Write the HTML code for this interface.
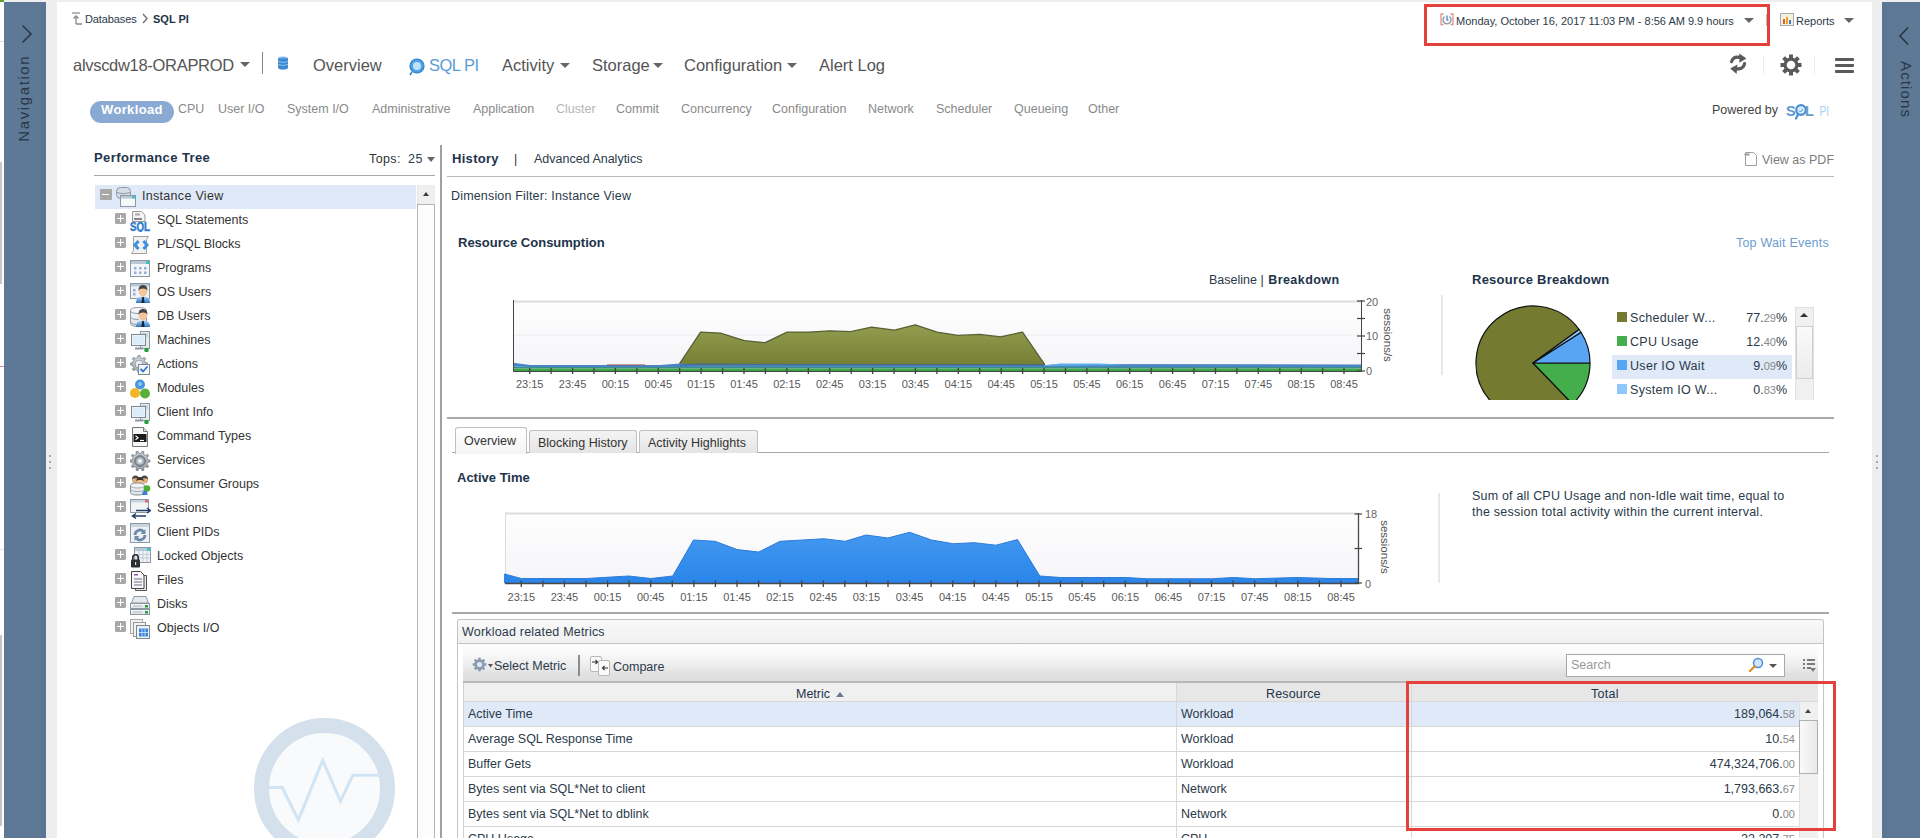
<!DOCTYPE html>
<html><head><meta charset="utf-8">
<style>
*{box-sizing:border-box;margin:0;padding:0}
html,body{width:1920px;height:838px;overflow:hidden}
body{position:relative;background:#eeeeee;font-family:"Liberation Sans",sans-serif;color:#2b3a4a}
.a{position:absolute}
.t{position:absolute;white-space:nowrap;line-height:16px;height:16px}
.side{position:absolute;top:2px;height:836px;background:#5d7995}
#main{position:absolute;left:57px;top:2px;width:1815px;height:836px;background:#fff}
.nav{font-size:16.5px;color:#555;line-height:20px;height:20px}
.sub{font-size:12.5px;color:#8a8a8a}
.caret{position:absolute;width:0;height:0;border-left:5px solid transparent;border-right:5px solid transparent;border-top:5px solid #666}
.tree{font-size:12.5px;color:#333}
.pb{position:absolute;width:11px;height:11px;background:#a8a8a8;border-radius:1px}
.pb:before{content:"";position:absolute;left:2px;top:5px;width:7px;height:1px;background:#fff}
.pb.p:after{content:"";position:absolute;left:5px;top:2px;width:1px;height:7px;background:#fff}
.h{font-weight:bold;color:#22334a}
</style></head><body>
<!-- left strip -->
<div class="a" style="left:0;top:0;width:4px;height:838px;background:#f4f4f4"></div>
<div class="a" style="left:0;top:0;width:4px;height:2px;background:#5aa02c"></div>
<div class="a" style="left:0;top:0;width:4px;height:838px;background:#fdfdfd"></div><div class="a" style="left:0;top:0;width:4px;height:2px;background:#5aa02c"></div><div class="a" style="left:0;top:162px;width:2px;height:122px;background:#c8c8c8"></div><div class="a" style="left:0;top:366px;width:4px;height:1px;background:#c89090"></div><div class="a" style="left:0;top:549px;width:4px;height:1px;background:#e4e4e4"></div><div class="a" style="left:0;top:635px;width:2px;height:191px;background:#c4c4c4"></div><div class="a" style="left:0;top:41px;width:4px;height:1px;background:#ddd"></div>
<div class="side" style="left:4px;width:42px"></div><div class="a" style="left:41px;top:2px;width:5px;height:836px;background:#5a7694"></div>
<svg class="a" style="left:20px;top:24px" width="14" height="20"><path d="M2.5 1.5 L11 10 L2.5 18.5" fill="none" stroke="#2a3645" stroke-width="1.6"/></svg>
<div class="t" style="left:-21px;top:91px;width:90px;height:16px;font-size:15px;letter-spacing:1.6px;text-indent:1.6px;color:#2a3645;transform:rotate(-90deg);text-align:center">Navigation</div>
<div class="a" style="left:49px;top:455px;width:2px;height:2px;background:#aaa"></div>
<div class="a" style="left:49px;top:461px;width:2px;height:2px;background:#aaa"></div>
<div class="a" style="left:49px;top:467px;width:2px;height:2px;background:#aaa"></div>

<div class="side" style="left:1882px;width:38px"></div><div class="a" style="left:1882px;top:2px;width:5px;height:836px;background:#5a7694"></div>
<svg class="a" style="left:1898px;top:26px" width="12" height="20"><path d="M10 1.5 L2 10 L10 18.5" fill="none" stroke="#2a3645" stroke-width="1.6"/></svg>
<div class="t" style="left:1874px;top:81px;width:64px;height:16px;font-size:15px;letter-spacing:1.1px;text-indent:1.1px;color:#2a3645;transform:rotate(90deg);text-align:center">Actions</div>
<div class="a" style="left:1876px;top:455px;width:2px;height:2px;background:#aaa"></div>
<div class="a" style="left:1876px;top:461px;width:2px;height:2px;background:#aaa"></div>
<div class="a" style="left:1876px;top:467px;width:2px;height:2px;background:#aaa"></div>

<div id="main"></div>

<!-- ===== HEADER ===== -->
<svg class="a" style="left:72px;top:12px" width="11" height="13"><path d="M0 1h8" stroke="#888" stroke-width="1.2"/><path d="M4 12V4M1.5 6.5L4 4l2.5 2.5M4 12h6" stroke="#888" stroke-width="1.3" fill="none"/></svg>
<div class="t" style="left:85px;top:10.7px;font-size:11px;color:#2b3a4a;letter-spacing:-0.1px">Databases</div>
<svg class="a" style="left:141px;top:13px" width="8" height="11"><path d="M2 1l4 4.5L2 10" stroke="#777" stroke-width="1.5" fill="none"/></svg>
<div class="t h" style="left:153px;top:10.7px;font-size:11px">SQL PI</div>

<div class="t nav" style="left:73px;top:55px;letter-spacing:-0.3px">alvscdw18-ORAPROD</div>
<div class="caret" style="left:240px;top:62px"></div>
<div class="a" style="left:262px;top:52px;width:1px;height:22px;background:#888"></div>
<svg class="a" style="left:277px;top:56px" width="12" height="14"><ellipse cx="6" cy="2.5" rx="5" ry="2" fill="#7fb6e8"/><rect x="1" y="2.5" width="10" height="9" fill="#3f88d2"/><ellipse cx="6" cy="11.5" rx="5" ry="2" fill="#3f88d2"/><path d="M1 5.5q5 2 10 0M1 8.5q5 2 10 0" stroke="#9fd0f5" fill="none" stroke-width="0.8"/></svg>
<div class="t nav" style="left:313px;top:55px">Overview</div>
<svg class="a" style="left:408px;top:57px" width="18" height="19"><circle cx="9" cy="9" r="7" fill="#4da3e6" stroke="#2d7fc8" stroke-width="1.2"/><circle cx="9" cy="9" r="4" fill="#bfe2fb"/><path d="M4 15l-2 3" stroke="#2d7fc8" stroke-width="1.5"/></svg>
<div class="t nav" style="left:429px;top:55px;color:#5b9bd5;letter-spacing:-0.5px">SQL PI</div>
<div class="t nav" style="left:502px;top:55px">Activity</div>
<div class="caret" style="left:560px;top:63px"></div>
<div class="t nav" style="left:592px;top:55px">Storage</div>
<div class="caret" style="left:653px;top:63px"></div>
<div class="t nav" style="left:684px;top:55px">Configuration</div>
<div class="caret" style="left:787px;top:63px"></div>
<div class="t nav" style="left:819px;top:55px">Alert Log</div>

<!-- top right -->
<div class="a" style="left:1424px;top:4px;width:346px;height:42px;border:3px solid #e4403c"></div>
<svg class="a" style="left:1440px;top:13px" width="15" height="13"><path d="M3.5 1H1V11.5H3.5M10.5 1H13V11.5H10.5" stroke="#e09090" stroke-width="1.3" fill="none"/><path d="M4.6 3.6A4 4 0 1 0 9.4 3.6" stroke="#9aa0a4" stroke-width="1.6" fill="none"/><path d="M7 2.5V7H8.5" stroke="#4f8ed0" stroke-width="1.4" fill="none"/></svg>
<div class="t" style="left:1456px;top:13px;font-size:11px;color:#2b3a4a">Monday, October 16, 2017 11:03 PM - 8:56 AM 9.9 hours</div>
<div class="caret" style="left:1744px;top:18px"></div>
<div class="a" style="left:1766px;top:14px;width:1px;height:12px;background:#bbb"></div>
<svg class="a" style="left:1780px;top:13px" width="14" height="13"><rect x="0.5" y="0.5" width="13" height="12" fill="#f4f0e0" stroke="#aaa"/><rect x="3" y="6" width="2" height="5" fill="#e06030"/><rect x="6" y="4" width="2" height="7" fill="#f0a020"/><rect x="9" y="7" width="2" height="4" fill="#3080d0"/></svg>
<div class="t" style="left:1796px;top:13px;font-size:11px;color:#2b3a4a">Reports</div>
<div class="caret" style="left:1844px;top:18px"></div>

<svg class="a" style="left:1729px;top:53px" width="19" height="22"><path d="M2.6 8.6C3.6 5 7 3.6 11 4.4" stroke="#5a5a5a" stroke-width="3.2" fill="none" stroke-linecap="round"/><path d="M10.2 0.6L17.4 5.6 10.4 9.8z" fill="#5a5a5a"/><path d="M15.6 10.6C15 14.6 11.6 16.4 7.4 15.8" stroke="#5a5a5a" stroke-width="3.2" fill="none" stroke-linecap="round"/><path d="M8.4 11.6L1.2 15.6 7.6 21z" fill="#5a5a5a"/></svg>
<div class="a" style="left:1763px;top:56px;width:1px;height:18px;background:#eee"></div>
<svg class="a" style="left:1780px;top:54px" width="22" height="22"><g fill="#5a5a5a" transform="translate(11 11)"><rect x="-2" y="-10.5" width="4" height="21"/><rect x="-2" y="-10.5" width="4" height="21" transform="rotate(45)"/><rect x="-2" y="-10.5" width="4" height="21" transform="rotate(90)"/><rect x="-2" y="-10.5" width="4" height="21" transform="rotate(135)"/><circle r="7.5"/></g><circle cx="11" cy="11" r="4.3" fill="#fff"/></svg>
<div class="a" style="left:1814px;top:56px;width:1px;height:18px;background:#eee"></div>
<div class="a" style="left:1835px;top:57.5px;width:19px;height:3px;background:#5a5a5a;border-radius:1px"></div>
<div class="a" style="left:1835px;top:63.5px;width:19px;height:3px;background:#5a5a5a;border-radius:1px"></div>
<div class="a" style="left:1835px;top:69.5px;width:19px;height:3px;background:#5a5a5a;border-radius:1px"></div>

<!-- sub tabs -->
<div class="a" style="left:90px;top:101px;width:84px;height:22px;border-radius:11px;background:#8aaad3"></div>
<div class="t" style="left:101px;top:100px;height:20px;line-height:20px;font-size:13px;font-weight:bold;color:#fff;letter-spacing:0.35px">Workload</div>
<div class="t sub" style="left:178px;top:101px">CPU</div>
<div class="t sub" style="left:218px;top:101px">User I/O</div>
<div class="t sub" style="left:287px;top:101px">System I/O</div>
<div class="t sub" style="left:372px;top:101px">Administrative</div>
<div class="t sub" style="left:473px;top:101px">Application</div>
<div class="t sub" style="left:556px;top:101px;color:#b5b5b5">Cluster</div>
<div class="t sub" style="left:616px;top:101px">Commit</div>
<div class="t sub" style="left:681px;top:101px">Concurrency</div>
<div class="t sub" style="left:772px;top:101px">Configuration</div>
<div class="t sub" style="left:868px;top:101px">Network</div>
<div class="t sub" style="left:936px;top:101px">Scheduler</div>
<div class="t sub" style="left:1014px;top:101px">Queueing</div>
<div class="t sub" style="left:1088px;top:101px">Other</div>
<div class="t" style="left:1712px;top:102px;font-size:12.5px;color:#444">Powered by</div>
<svg class="a" style="left:1784px;top:100px" width="50" height="22"><text x="2" y="15.5" font-family="Liberation Sans" font-weight="bold" font-size="14.5" fill="#5896d2">S</text><circle cx="17" cy="10" r="4.8" fill="#d8ecfb" stroke="#4a8fd0" stroke-width="2.2"/><path d="M14 14.5l-2 4" stroke="#4a8fd0" stroke-width="2.2" stroke-linecap="round"/><path d="M15 10.5l1.5 1.5 2.5-3" stroke="#4a8fd0" stroke-width="1" fill="none"/><text x="21" y="15.5" font-family="Liberation Sans" font-weight="bold" font-size="14.5" fill="#6a9cc8">L</text><text x="35.5" y="15.5" font-family="Liberation Sans" font-size="14" fill="#a6d0f0" textLength="9.5" lengthAdjust="spacingAndGlyphs">PI</text></svg>

<!--TREE-->
<div class="t h" style="left:94px;top:150px;font-size:13px;letter-spacing:0.4px">Performance Tree</div>
<div class="t" style="left:369px;top:151px;font-size:12.5px;color:#333;letter-spacing:0.4px">Tops:</div><div class="t" style="left:408px;top:151px;font-size:12.5px;color:#2b4050;letter-spacing:0.5px">25</div>
<div class="caret" style="left:427px;top:157px;border-left-width:4px;border-right-width:4px;border-top-width:5px;border-top-color:#666"></div>
<div class="a" style="left:94px;top:175px;width:341px;height:1px;background:#a8a8a8"></div>
<div class="a" style="left:95px;top:185px;width:321px;height:24px;background:#dfe9f7"></div>
<div class="pb" style="left:100px;top:189px;width:12px;height:11px"></div>
<div class="t tree" style="left:142px;top:188px;letter-spacing:0.3px">Instance View</div>
<div class="pb p" style="left:115px;top:213px"></div>
<div class="t tree" style="left:157px;top:212px">SQL Statements</div>
<div class="pb p" style="left:115px;top:237px"></div>
<div class="t tree" style="left:157px;top:236px">PL/SQL Blocks</div>
<div class="pb p" style="left:115px;top:261px"></div>
<div class="t tree" style="left:157px;top:260px">Programs</div>
<div class="pb p" style="left:115px;top:285px"></div>
<div class="t tree" style="left:157px;top:284px">OS Users</div>
<div class="pb p" style="left:115px;top:309px"></div>
<div class="t tree" style="left:157px;top:308px">DB Users</div>
<div class="pb p" style="left:115px;top:333px"></div>
<div class="t tree" style="left:157px;top:332px">Machines</div>
<div class="pb p" style="left:115px;top:357px"></div>
<div class="t tree" style="left:157px;top:356px">Actions</div>
<div class="pb p" style="left:115px;top:381px"></div>
<div class="t tree" style="left:157px;top:380px">Modules</div>
<div class="pb p" style="left:115px;top:405px"></div>
<div class="t tree" style="left:157px;top:404px">Client Info</div>
<div class="pb p" style="left:115px;top:429px"></div>
<div class="t tree" style="left:157px;top:428px">Command Types</div>
<div class="pb p" style="left:115px;top:453px"></div>
<div class="t tree" style="left:157px;top:452px">Services</div>
<div class="pb p" style="left:115px;top:477px"></div>
<div class="t tree" style="left:157px;top:476px">Consumer Groups</div>
<div class="pb p" style="left:115px;top:501px"></div>
<div class="t tree" style="left:157px;top:500px">Sessions</div>
<div class="pb p" style="left:115px;top:525px"></div>
<div class="t tree" style="left:157px;top:524px">Client PIDs</div>
<div class="pb p" style="left:115px;top:549px"></div>
<div class="t tree" style="left:157px;top:548px">Locked Objects</div>
<div class="pb p" style="left:115px;top:573px"></div>
<div class="t tree" style="left:157px;top:572px">Files</div>
<div class="pb p" style="left:115px;top:597px"></div>
<div class="t tree" style="left:157px;top:596px">Disks</div>
<div class="pb p" style="left:115px;top:621px"></div>
<div class="t tree" style="left:157px;top:620px">Objects I/O</div>
<div class="a" style="left:417px;top:185px;width:18px;height:653px;background:#f2f2f2;border-left:1px solid #e6e6e6"></div>
<div class="a" style="left:418px;top:185px;width:17px;height:19px;background:#efefef"></div>
<div class="caret" style="left:423px;top:192px;border-top:none;border-bottom:4px solid #3a3a3a;border-left-width:3.5px;border-right-width:3.5px"></div>
<div class="a" style="left:417px;top:204px;width:18px;height:634px;background:#fdfdfd;border:1.5px solid #b4b4b4;border-bottom:none"></div>
<svg class="a" style="left:252px;top:716px" width="146" height="122"><circle cx="72.5" cy="72.5" r="63" fill="#f9fafc" stroke="#d4e0ec" stroke-width="15"/><path d="M16.6 71.6H30.2L46.4 103.8 70.7 44.3 88.5 85.2 100.9 59.2H127" fill="none" stroke="#cfe5f5" stroke-width="3"/></svg>
<div class="a" style="left:440px;top:145px;width:2px;height:693px;background:#a0a0a0"></div>

<svg class="a" style="left:0;top:0;width:0;height:0" width="0" height="0"><defs><linearGradient id="gy" x1="0" y1="0" x2="0" y2="1"><stop offset="0" stop-color="#f8f9fa"/><stop offset="1" stop-color="#dfe3e7"/></linearGradient><radialGradient id="gear" cx="0.5" cy="0.4" r="0.6"><stop offset="0" stop-color="#f0f2f4"/><stop offset="1" stop-color="#8a929a"/></radialGradient><linearGradient id="shirt" x1="0" y1="0" x2="0" y2="1"><stop offset="0" stop-color="#a9d3f3"/><stop offset="1" stop-color="#2a78c8"/></linearGradient></defs></svg>
<svg class="a" style="left:115px;top:187px" width="21" height="21"><rect x="1.5" y="0.5" width="14" height="11" rx="4" fill="#d6dde4" stroke="#8c98a4"/><path d="M1.5 5.5q7 2.5 14 0" stroke="#8c98a4" fill="none"/><rect x="5.5" y="8.5" width="15" height="11" fill="#f6f8fa" stroke="#8c98a4"/><rect x="6" y="9" width="14" height="2.5" fill="#b9c8d6"/><rect x="17" y="9" width="3" height="2.5" fill="#39c6c6"/></svg>
<svg class="a" style="left:130px;top:211px" width="21" height="21"><path d="M2.5 0.5h9l3.5 3.5v6.5h-12.5z" fill="#f4f4f4" stroke="#9a9a9a"/><rect x="5" y="2.5" width="5" height="2" fill="#aaa"/><rect x="4" y="7" width="8" height="2" fill="#888"/><text x="0" y="19.5" font-family="Liberation Sans" font-weight="bold" font-size="12" fill="#2f7cd0" stroke="#2f7cd0" stroke-width="0.5" textLength="20" lengthAdjust="spacingAndGlyphs">SQL</text></svg>
<svg class="a" style="left:130px;top:235px" width="21" height="21"><path d="M3.5 1.5h15l-2 3v14h-15l2-3z" fill="#f2f2f2" stroke="#a0a0a0"/><path d="M8.5 6l-3.5 4 3.5 4M13.5 6l3.5 4-3.5 4" stroke="#3d8fe0" stroke-width="3" fill="none" stroke-linejoin="miter"/></svg>
<svg class="a" style="left:130px;top:259px" width="21" height="21"><rect x="0.5" y="1.5" width="19" height="16" fill="#f4f6f8" stroke="#8c98a4"/><rect x="1" y="2" width="18" height="3" fill="#b9c8d6"/><rect x="16" y="2" width="3" height="3" fill="#39c6c6"/><g fill="#8fb0d8"><rect x="4" y="8" width="2.5" height="2.5"/><rect x="9" y="8" width="2.5" height="2.5"/><rect x="14" y="8" width="2.5" height="2.5"/><rect x="4" y="12.5" width="2.5" height="2.5"/><rect x="9" y="12.5" width="2.5" height="2.5"/><rect x="14" y="12.5" width="2.5" height="2.5"/></g></svg>
<svg class="a" style="left:130px;top:283px" width="21" height="21"><rect x="0.5" y="0.5" width="19" height="15" fill="#f0f3f6" stroke="#8c98a4"/><rect x="1" y="1" width="18" height="2.5" fill="#b9c8d6"/><rect x="3" y="6" width="2.5" height="2.5" fill="#8fb0d8"/><rect x="3" y="10" width="2.5" height="2.5" fill="#8fb0d8"/><path d="M6 20c0-4.5 2.5-6.5 7-6.5s7 2 7 6.5z" fill="url(#shirt)"/><path d="M12.2 14l-0.8 6h3.2l-0.8-6z" fill="#1d2430"/><ellipse cx="13" cy="8.5" rx="4.2" ry="5" fill="#f4c49a"/><path d="M8.6 8c-0.4-4 1.5-6 4.4-6s4.8 2 4.4 6c-0.6-2-2-2.6-4.4-2.6S9.2 6 8.6 8z" fill="#4a4440"/></svg>
<svg class="a" style="left:130px;top:307px" width="21" height="21"><path d="M0.5 3.5c0-2 3-3 8-3s8 1 8 3v13c0 2-3 3-8 3s-8-1-8-3z" fill="url(#gy)" stroke="#8c98a4"/><path d="M0.5 3.5c0 2 3 3 8 3s8-1 8-3M0.5 9.5c0 2 3 3 8 3M0.5 14.5c0 2 3 3 8 3" stroke="#8c98a4" fill="none"/><path d="M6 20c0-4.5 2.5-6.5 7-6.5s7 2 7 6.5z" fill="url(#shirt)"/><path d="M12.2 14l-0.8 6h3.2l-0.8-6z" fill="#1d2430"/><ellipse cx="13" cy="8.5" rx="4.2" ry="5" fill="#f4c49a"/><path d="M8.6 8c-0.4-4 1.5-6 4.4-6s4.8 2 4.4 6c-0.6-2-2-2.6-4.4-2.6S9.2 6 8.6 8z" fill="#4a4440"/></svg>
<svg class="a" style="left:130px;top:331px" width="21" height="21"><rect x="10.5" y="0.5" width="9" height="17" fill="#e6eaee" stroke="#8c98a4"/><path d="M12 3h6M12 5h6" stroke="#b0bac4"/><rect x="1.5" y="3.5" width="14" height="11" fill="#eaf4fb" stroke="#7c8894"/><rect x="3" y="5" width="11" height="8" fill="#dcecf8"/><path d="M5 17.5h8" stroke="#8c98a4" stroke-width="2"/><circle cx="16.5" cy="19" r="2.3" fill="#28a040"/></svg>
<svg class="a" style="left:130px;top:355px" width="21" height="21"><path d="M15.35 7.61 L17.43 7.90 L17.43 10.10 L15.35 10.39 L15.01 11.49 L14.47 12.50 L15.74 14.18 L14.18 15.74 L12.50 14.47 L11.49 15.01 L10.39 15.35 L10.10 17.43 L7.90 17.43 L7.61 15.35 L6.51 15.01 L5.50 14.47 L3.82 15.74 L2.26 14.18 L3.53 12.50 L2.99 11.49 L2.65 10.39 L0.57 10.10 L0.57 7.90 L2.65 7.61 L2.99 6.51 L3.53 5.50 L2.26 3.82 L3.82 2.26 L5.50 3.53 L6.51 2.99 L7.61 2.65 L7.90 0.57 L10.10 0.57 L10.39 2.65 L11.49 2.99 L12.50 3.53 L14.18 2.26 L15.74 3.82 L14.47 5.50 L15.01 6.51Z" fill="url(#gear)" stroke="#7a838c" stroke-width="0.7"/><circle cx="9" cy="9" r="4" fill="#e8ecf0" stroke="#7a838c" stroke-width="0.7"/><rect x="8.5" y="9.5" width="11" height="10" fill="#f4f6f8" stroke="#7c8894"/><path d="M10.5 14l2.5 2.5 4.5-5" stroke="#2f74c8" stroke-width="1.8" fill="none"/></svg>
<svg class="a" style="left:130px;top:379px" width="21" height="21"><circle cx="10" cy="5.5" r="5" fill="#4a95e2"/><circle cx="5" cy="14" r="5" fill="#f2b628"/><circle cx="15" cy="14.5" r="5" fill="#58b038"/><circle cx="10" cy="5" r="2" fill="#8cc4f4"/></svg>
<svg class="a" style="left:130px;top:403px" width="21" height="21"><rect x="10.5" y="0.5" width="9" height="17" fill="#e6eaee" stroke="#8c98a4"/><path d="M12 3h6M12 5h6" stroke="#b0bac4"/><rect x="1.5" y="3.5" width="14" height="11" fill="#eaf4fb" stroke="#7c8894"/><rect x="3" y="5" width="11" height="8" fill="#dcecf8"/><path d="M5 17.5h8" stroke="#8c98a4" stroke-width="2"/><circle cx="16.5" cy="19" r="2.3" fill="#28a040"/></svg>
<svg class="a" style="left:130px;top:427px" width="21" height="21"><path d="M2.5 0.5h11l4 4v15h-15z" fill="#f6f6f6" stroke="#777"/><path d="M13.5 0.5v4h4" fill="#ddd" stroke="#777"/><rect x="3.5" y="7" width="13" height="8" fill="#1a1a1a"/><path d="M5.5 8.8l2.6 2-2.6 2" stroke="#fff" stroke-width="1.1" fill="none"/><path d="M10 13.5h4" stroke="#fff" stroke-width="1.2"/></svg>
<svg class="a" style="left:130px;top:451px" width="21" height="21"><path d="M17.49 8.69 L19.95 8.97 L19.95 11.03 L17.49 11.31 L17.23 12.35 L16.83 13.34 L18.66 15.01 L17.44 16.68 L15.29 15.46 L14.47 16.15 L13.56 16.72 L14.06 19.14 L12.09 19.78 L11.07 17.52 L10.00 17.60 L8.93 17.52 L7.91 19.78 L5.94 19.14 L6.44 16.72 L5.53 16.15 L4.71 15.46 L2.56 16.68 L1.34 15.01 L3.17 13.34 L2.77 12.35 L2.51 11.31 L0.05 11.03 L0.05 8.97 L2.51 8.69 L2.77 7.65 L3.17 6.66 L1.34 4.99 L2.56 3.32 L4.71 4.54 L5.53 3.85 L6.44 3.28 L5.94 0.86 L7.91 0.22 L8.93 2.48 L10.00 2.40 L11.07 2.48 L12.09 0.22 L14.06 0.86 L13.56 3.28 L14.47 3.85 L15.29 4.54 L17.44 3.32 L18.66 4.99 L16.83 6.66 L17.23 7.65Z" fill="url(#gear)" stroke="#6a737c" stroke-width="0.7"/><circle cx="10" cy="10" r="5.4" fill="#8a949e" stroke="#5a636c" stroke-width="0.8"/><circle cx="10" cy="10" r="3.6" fill="#b8c0c8"/><circle cx="10" cy="10" r="1.8" fill="#fff"/></svg>
<svg class="a" style="left:130px;top:475px" width="21" height="21"><circle cx="5.5" cy="5" r="3.5" fill="#e2b080"/><circle cx="14.5" cy="5" r="3.5" fill="#e2b080"/><path d="M2 4.5c0-3 1.5-4 3.5-4s3.5 1 3.5 4c-1-1-2-1.2-3.5-1.2S3 3.5 2 4.5zM11 4.5c0-3 1.5-4 3.5-4s3.5 1 3.5 4c-1-1-2-1.2-3.5-1.2S12 3.5 11 4.5z" fill="#4a4440"/><circle cx="10" cy="7" r="3.8" fill="#eec090"/><path d="M6.3 6.5c0-3 1.6-4.5 3.7-4.5s3.7 1.5 3.7 4.5c-1-1.2-2.2-1.5-3.7-1.5s-2.7 0.3-3.7 1.5z" fill="#3a3430"/><path d="M0.5 10.5c0-1.5 2.5-2.5 7-2.5s7 1 7 2.5v7c0 1.5-2.5 2.5-7 2.5s-7-1-7-2.5z" fill="url(#gy)" stroke="#7c8894"/><path d="M0.5 10.5c0 1.5 2.5 2.5 7 2.5s7-1 7-2.5M0.5 14c0 1.5 2.5 2.5 7 2.5s7-1 7-2.5" stroke="#9aa6b2" fill="none"/><circle cx="17" cy="13.5" r="3.3" fill="#4cb030"/><path d="M12 20c0-3 1.5-4.5 3-4.5s2.5 1 2.5 4.5z" fill="#3a80d0"/></svg>
<svg class="a" style="left:130px;top:499px" width="21" height="21"><rect x="0.5" y="0.5" width="18" height="13" fill="#f2f4f6" stroke="#8c98a4"/><rect x="1" y="1" width="17" height="2.5" fill="#c9d4de"/><rect x="15" y="1" width="3" height="2.5" fill="#e06a6a"/><path d="M6 11.5h14M17 9l3.5 2.5-3.5 2.5M16 17H3M6 14.5l-3.5 2.5 3.5 2.5" stroke="#1f3f66" stroke-width="1.5" fill="none"/></svg>
<svg class="a" style="left:130px;top:523px" width="21" height="21"><rect x="0.5" y="0.5" width="19" height="19" fill="#eef2f6" stroke="#8c98a4"/><rect x="1" y="1" width="18" height="3" fill="#c9d4de"/><path d="M5 12a5 5 0 0 1 8.5-3.5" stroke="#6f8aa6" stroke-width="2.8" fill="none"/><path d="M15.5 6v5h-5z" fill="#6f8aa6"/><path d="M15 12a5 5 0 0 1-8.5 3.5" stroke="#6f8aa6" stroke-width="2.8" fill="none"/><path d="M4.5 18v-5h5z" fill="#6f8aa6"/></svg>
<svg class="a" style="left:130px;top:547px" width="21" height="21"><rect x="4.5" y="0.5" width="16" height="15" fill="#f0f3f6" stroke="#8c98a4"/><rect x="5" y="1" width="15" height="3" fill="#b9c8d6"/><rect x="17" y="1" width="3" height="3" fill="#39c6c6"/><path d="M5 7.5h15M5 11h15M9 4v11M13 4v11M17 4v11" stroke="#c0ccd8"/><path d="M2.8 13v-2.5a2.7 2.7 0 0 1 5.4 0V13" stroke="#2a2a2a" fill="none" stroke-width="1.6"/><rect x="1" y="12.5" width="9" height="8" rx="1" fill="#2a2e33"/><rect x="5" y="15" width="1.2" height="3" fill="#ddd"/></svg>
<svg class="a" style="left:130px;top:571px" width="21" height="21"><path d="M5.5 4.5h11v15h-11z" fill="#e6e9ec" stroke="#555"/><path d="M1.5 0.5h9l3.5 3.5v13.5h-12.5z" fill="#f8f8f8" stroke="#444"/><rect x="4" y="3" width="4" height="1.5" fill="#8a5aa8"/><path d="M4 8h8M4 11h8M4 14h8" stroke="#6a6a8a"/></svg>
<svg class="a" style="left:130px;top:595px" width="21" height="21"><path d="M1.5 8l2.5-6.5h12l2.5 6.5z" fill="#e6eaee" stroke="#8c98a4"/><rect x="0.5" y="8.5" width="19" height="5" fill="url(#gy)" stroke="#8c98a4"/><rect x="0.5" y="14.5" width="19" height="5" fill="url(#gy)" stroke="#8c98a4"/><rect x="15" y="10" width="3" height="2.5" fill="#28a040"/><rect x="15" y="16" width="3" height="2.5" fill="#28a040"/><path d="M3 11h9M3 17h9" stroke="#b0bac4"/></svg>
<svg class="a" style="left:130px;top:619px" width="21" height="21"><rect x="0.5" y="0.5" width="12" height="14" fill="#f2f2f2" stroke="#aaa"/><rect x="3.5" y="3.5" width="12" height="14" fill="#f4f4f4" stroke="#999"/><rect x="6.5" y="6.5" width="13" height="13" fill="#eef2f6" stroke="#7c8894"/><rect x="9" y="9.5" width="9" height="8" fill="#3a86dd"/><path d="M12 9.5v8M15 9.5v8M9 13.5h9" stroke="#d6e8fa" stroke-width="0.8"/></svg>
<!--/TREE-->
<!--RIGHT-->
<div class="t h" style="left:452px;top:151px;font-size:13px;letter-spacing:0.3px">History</div>
<div class="t" style="left:514px;top:151px;font-size:12.5px;color:#333">|</div>
<div class="t" style="left:534px;top:151px;font-size:12.5px;color:#2b3a4a">Advanced Analytics</div>
<svg class="a" style="left:1744px;top:151px" width="14" height="16"><path d="M1.5 1.5h8l3 3v10h-11z" fill="#fff" stroke="#a0a0a0"/><path d="M0.5 3.5h5" stroke="#999" stroke-width="2"/></svg>
<div class="t" style="left:1762px;top:152px;font-size:12.5px;color:#7c7c7c">View as PDF</div>
<div class="a" style="left:447px;top:176px;width:1387px;height:1px;background:#b8b8b8"></div>
<div class="t" style="left:451px;top:188px;font-size:12.5px;color:#2b3a4a;letter-spacing:0.17px">Dimension Filter: Instance View</div>
<div class="t h" style="left:458px;top:235px;font-size:13px">Resource Consumption</div>
<div class="t" style="left:1736px;top:235px;font-size:12.5px;color:#6c9dcf;letter-spacing:0.2px">Top Wait Events</div>
<div class="t" style="left:1209px;top:272px;font-size:12.5px;color:#2b3a4a">Baseline <span style="color:#333">|</span> <b style="color:#22334a;letter-spacing:0.45px;margin-left:1px">Breakdown</b></div>
<div class="t h" style="left:1472px;top:272px;font-size:13px;letter-spacing:0.25px">Resource Breakdown</div>
<div class="a" style="left:1441px;top:295px;width:2px;height:80px;background:#e8e8e8"></div>
<svg class="a" style="left:0;top:0" width="1920" height="838"><defs><linearGradient id="bg1" x1="0" y1="0" x2="0" y2="1"><stop offset="0" stop-color="#fefefe"/><stop offset="1" stop-color="#f5f5f9"/></linearGradient><linearGradient id="ol" x1="0" y1="0" x2="0" y2="1"><stop offset="0" stop-color="#929d50"/><stop offset="1" stop-color="#768034"/></linearGradient><linearGradient id="bl" x1="0" y1="0" x2="0" y2="1"><stop offset="0" stop-color="#4499ef"/><stop offset="1" stop-color="#2a85ea"/></linearGradient></defs><rect x="513" y="301" width="848" height="69" fill="url(#bg1)"/><path d="M513 301.5H1361" stroke="#dcdcdc" stroke-width="2"/><path d="M513 335H1361" stroke="#ececf0" stroke-width="1"/><polygon points="679.8,365 679.8,363.3 700.6,332.1 720.4,333.1 744.4,340.6 765.2,342.7 787.1,332.1 809,332.1 829.8,330.8 850.6,331.7 871.5,327.1 894.4,330.2 915.2,324.8 937.1,332.1 957.9,335.4 979.8,334.4 1000.6,336.9 1022.5,332.1 1044.4,364 1044.4,365" fill="url(#ol)" stroke="#5a6034" stroke-width="1.3" stroke-linejoin="round"/><path d="M513 362.8L530 365 660 365 680 363.5 700 365.2 1044 365.2 1060 364 1361 364.5 1361 367 513 367z" fill="#4a84c4"/><path d="M607 364.8H645" stroke="#a03a3a" stroke-width="0.7"/><path d="M513 365.5L530 367 513 368z" fill="#5aa0e0"/><path d="M1044 365.5L1060 363.5 1100 363.5 1130 365 1044 366z" fill="#5bb0ea"/><rect x="513" y="367" width="848" height="1.5" fill="#3a8f86"/><rect x="513" y="368.5" width="848" height="2.5" fill="#3fa647"/><path d="M680 365.5L700 364 760 364.5 1044 365" stroke="#3a6ca8" stroke-width="1" fill="none"/><path d="M513.5 300V371.5H1361.5V300" stroke="#444" stroke-width="1" fill="none"/><path d="M529.7 368V374" stroke="#444" stroke-width="1.3"/><path d="M551.1 368V374" stroke="#444" stroke-width="1.3"/><path d="M572.6 368V374" stroke="#444" stroke-width="1.3"/><path d="M594.0 368V374" stroke="#444" stroke-width="1.3"/><path d="M615.4 368V374" stroke="#444" stroke-width="1.3"/><path d="M636.9 368V374" stroke="#444" stroke-width="1.3"/><path d="M658.3 368V374" stroke="#444" stroke-width="1.3"/><path d="M679.7 368V374" stroke="#444" stroke-width="1.3"/><path d="M701.1 368V374" stroke="#444" stroke-width="1.3"/><path d="M722.6 368V374" stroke="#444" stroke-width="1.3"/><path d="M744.0 368V374" stroke="#444" stroke-width="1.3"/><path d="M765.4 368V374" stroke="#444" stroke-width="1.3"/><path d="M786.9 368V374" stroke="#444" stroke-width="1.3"/><path d="M808.3 368V374" stroke="#444" stroke-width="1.3"/><path d="M829.7 368V374" stroke="#444" stroke-width="1.3"/><path d="M851.2 368V374" stroke="#444" stroke-width="1.3"/><path d="M872.6 368V374" stroke="#444" stroke-width="1.3"/><path d="M894.0 368V374" stroke="#444" stroke-width="1.3"/><path d="M915.4 368V374" stroke="#444" stroke-width="1.3"/><path d="M936.9 368V374" stroke="#444" stroke-width="1.3"/><path d="M958.3 368V374" stroke="#444" stroke-width="1.3"/><path d="M979.7 368V374" stroke="#444" stroke-width="1.3"/><path d="M1001.2 368V374" stroke="#444" stroke-width="1.3"/><path d="M1022.6 368V374" stroke="#444" stroke-width="1.3"/><path d="M1044.0 368V374" stroke="#444" stroke-width="1.3"/><path d="M1065.5 368V374" stroke="#444" stroke-width="1.3"/><path d="M1086.9 368V374" stroke="#444" stroke-width="1.3"/><path d="M1108.3 368V374" stroke="#444" stroke-width="1.3"/><path d="M1129.7 368V374" stroke="#444" stroke-width="1.3"/><path d="M1151.2 368V374" stroke="#444" stroke-width="1.3"/><path d="M1172.6 368V374" stroke="#444" stroke-width="1.3"/><path d="M1194.0 368V374" stroke="#444" stroke-width="1.3"/><path d="M1215.5 368V374" stroke="#444" stroke-width="1.3"/><path d="M1236.9 368V374" stroke="#444" stroke-width="1.3"/><path d="M1258.3 368V374" stroke="#444" stroke-width="1.3"/><path d="M1279.8 368V374" stroke="#444" stroke-width="1.3"/><path d="M1301.2 368V374" stroke="#444" stroke-width="1.3"/><path d="M1322.6 368V374" stroke="#444" stroke-width="1.3"/><path d="M1344.0 368V374" stroke="#444" stroke-width="1.3"/><path d="M1357 301.0H1365" stroke="#444" stroke-width="1.2"/><path d="M1357 318.5H1365" stroke="#444" stroke-width="1.2"/><path d="M1357 336.0H1365" stroke="#444" stroke-width="1.2"/><path d="M1357 353.5H1365" stroke="#444" stroke-width="1.2"/><path d="M1357 371.0H1365" stroke="#444" stroke-width="1.2"/><text x="529.7" y="387.5" font-size="11" fill="#595959" text-anchor="middle" font-family="Liberation Sans">23:15</text><text x="572.6" y="387.5" font-size="11" fill="#595959" text-anchor="middle" font-family="Liberation Sans">23:45</text><text x="615.4" y="387.5" font-size="11" fill="#595959" text-anchor="middle" font-family="Liberation Sans">00:15</text><text x="658.3" y="387.5" font-size="11" fill="#595959" text-anchor="middle" font-family="Liberation Sans">00:45</text><text x="701.1" y="387.5" font-size="11" fill="#595959" text-anchor="middle" font-family="Liberation Sans">01:15</text><text x="744.0" y="387.5" font-size="11" fill="#595959" text-anchor="middle" font-family="Liberation Sans">01:45</text><text x="786.9" y="387.5" font-size="11" fill="#595959" text-anchor="middle" font-family="Liberation Sans">02:15</text><text x="829.7" y="387.5" font-size="11" fill="#595959" text-anchor="middle" font-family="Liberation Sans">02:45</text><text x="872.6" y="387.5" font-size="11" fill="#595959" text-anchor="middle" font-family="Liberation Sans">03:15</text><text x="915.4" y="387.5" font-size="11" fill="#595959" text-anchor="middle" font-family="Liberation Sans">03:45</text><text x="958.3" y="387.5" font-size="11" fill="#595959" text-anchor="middle" font-family="Liberation Sans">04:15</text><text x="1001.2" y="387.5" font-size="11" fill="#595959" text-anchor="middle" font-family="Liberation Sans">04:45</text><text x="1044.0" y="387.5" font-size="11" fill="#595959" text-anchor="middle" font-family="Liberation Sans">05:15</text><text x="1086.9" y="387.5" font-size="11" fill="#595959" text-anchor="middle" font-family="Liberation Sans">05:45</text><text x="1129.7" y="387.5" font-size="11" fill="#595959" text-anchor="middle" font-family="Liberation Sans">06:15</text><text x="1172.6" y="387.5" font-size="11" fill="#595959" text-anchor="middle" font-family="Liberation Sans">06:45</text><text x="1215.5" y="387.5" font-size="11" fill="#595959" text-anchor="middle" font-family="Liberation Sans">07:15</text><text x="1258.3" y="387.5" font-size="11" fill="#595959" text-anchor="middle" font-family="Liberation Sans">07:45</text><text x="1301.2" y="387.5" font-size="11" fill="#595959" text-anchor="middle" font-family="Liberation Sans">08:15</text><text x="1344.0" y="387.5" font-size="11" fill="#595959" text-anchor="middle" font-family="Liberation Sans">08:45</text><text x="1366" y="306" font-size="11" fill="#666" font-family="Liberation Sans">20</text><text x="1366" y="340" font-size="11" fill="#666" font-family="Liberation Sans">10</text><text x="1366" y="375" font-size="11" fill="#666" font-family="Liberation Sans">0</text><text transform="translate(1383.5 335) rotate(90)" font-size="11.5" fill="#555" text-anchor="middle" font-family="Liberation Sans">sessions/s</text><clipPath id="pc"><rect x="1460" y="290" width="150" height="110"/></clipPath><g clip-path="url(#pc)"><path d="M1533.00 363.00 L1579.11 329.50 A57.00 57.00 0 1 0 1572.60 404.00 Z" fill="#747b31" stroke="#111" stroke-width="1.2" stroke-linejoin="round"/><path d="M1533.00 363.00 L1572.60 404.00 A57.00 57.00 0 0 0 1590.00 363.00 Z" fill="#44ad4c" stroke="#111" stroke-width="1.2" stroke-linejoin="round"/><path d="M1533.00 363.00 L1590.00 363.00 A57.00 57.00 0 0 0 1581.02 332.29 Z" fill="#58a6f3" stroke="#111" stroke-width="1.2" stroke-linejoin="round"/><path d="M1533.00 363.00 L1581.02 332.29 A57.00 57.00 0 0 0 1579.11 329.50 Z" fill="#8ec7f8" stroke="#111" stroke-width="1.2" stroke-linejoin="round"/></g><rect x="505" y="513" width="853" height="70" fill="url(#bg1)"/><path d="M505 513.5H1358" stroke="#dcdcdc" stroke-width="2"/><path d="M505.5 513V583" stroke="#dcdcdc" stroke-width="1"/><polygon points="504.6,583 504.6,574 521.3,578.5 586.3,578.5 628.5,576 651,578.5 672.7,576 693.5,540 715,541.3 737.3,549.6 758.8,552 780,541.3 802.5,540 823.8,538.75 845.2,541.3 866,535 887.9,538 909.6,532.3 931.5,540 953.3,543.75 974.2,542.7 996,545.2 1017.5,539.6 1039.8,576 1060.6,577.5 1126.25,577.5 1147,578.75 1211.7,578.75 1233.5,577.5 1255.4,578.75 1297,577.5 1330,578.5 1358,578.5 1358,583" fill="url(#bl)" stroke="#2d7cd8" stroke-width="1" stroke-linejoin="round"/><path d="M505 583.5H1358.5V513" stroke="#4a4a4a" stroke-width="1.3" fill="none"/><path d="M521.3 580.5V587" stroke="#444" stroke-width="1.3"/><path d="M542.9 580.5V587" stroke="#444" stroke-width="1.3"/><path d="M564.4 580.5V587" stroke="#444" stroke-width="1.3"/><path d="M586.0 580.5V587" stroke="#444" stroke-width="1.3"/><path d="M607.6 580.5V587" stroke="#444" stroke-width="1.3"/><path d="M629.1 580.5V587" stroke="#444" stroke-width="1.3"/><path d="M650.7 580.5V587" stroke="#444" stroke-width="1.3"/><path d="M672.3 580.5V587" stroke="#444" stroke-width="1.3"/><path d="M693.9 580.5V587" stroke="#444" stroke-width="1.3"/><path d="M715.4 580.5V587" stroke="#444" stroke-width="1.3"/><path d="M737.0 580.5V587" stroke="#444" stroke-width="1.3"/><path d="M758.6 580.5V587" stroke="#444" stroke-width="1.3"/><path d="M780.1 580.5V587" stroke="#444" stroke-width="1.3"/><path d="M801.7 580.5V587" stroke="#444" stroke-width="1.3"/><path d="M823.3 580.5V587" stroke="#444" stroke-width="1.3"/><path d="M844.8 580.5V587" stroke="#444" stroke-width="1.3"/><path d="M866.4 580.5V587" stroke="#444" stroke-width="1.3"/><path d="M888.0 580.5V587" stroke="#444" stroke-width="1.3"/><path d="M909.6 580.5V587" stroke="#444" stroke-width="1.3"/><path d="M931.1 580.5V587" stroke="#444" stroke-width="1.3"/><path d="M952.7 580.5V587" stroke="#444" stroke-width="1.3"/><path d="M974.3 580.5V587" stroke="#444" stroke-width="1.3"/><path d="M995.8 580.5V587" stroke="#444" stroke-width="1.3"/><path d="M1017.4 580.5V587" stroke="#444" stroke-width="1.3"/><path d="M1039.0 580.5V587" stroke="#444" stroke-width="1.3"/><path d="M1060.5 580.5V587" stroke="#444" stroke-width="1.3"/><path d="M1082.1 580.5V587" stroke="#444" stroke-width="1.3"/><path d="M1103.7 580.5V587" stroke="#444" stroke-width="1.3"/><path d="M1125.3 580.5V587" stroke="#444" stroke-width="1.3"/><path d="M1146.8 580.5V587" stroke="#444" stroke-width="1.3"/><path d="M1168.4 580.5V587" stroke="#444" stroke-width="1.3"/><path d="M1190.0 580.5V587" stroke="#444" stroke-width="1.3"/><path d="M1211.5 580.5V587" stroke="#444" stroke-width="1.3"/><path d="M1233.1 580.5V587" stroke="#444" stroke-width="1.3"/><path d="M1254.7 580.5V587" stroke="#444" stroke-width="1.3"/><path d="M1276.2 580.5V587" stroke="#444" stroke-width="1.3"/><path d="M1297.8 580.5V587" stroke="#444" stroke-width="1.3"/><path d="M1319.4 580.5V587" stroke="#444" stroke-width="1.3"/><path d="M1341.0 580.5V587" stroke="#444" stroke-width="1.3"/><path d="M1354.5 514.0H1362" stroke="#444" stroke-width="1.2"/><path d="M1354.5 548.5H1362" stroke="#444" stroke-width="1.2"/><path d="M1354.5 583.0H1362" stroke="#444" stroke-width="1.2"/><text x="521.3" y="600.5" font-size="11" fill="#595959" text-anchor="middle" font-family="Liberation Sans">23:15</text><text x="564.4" y="600.5" font-size="11" fill="#595959" text-anchor="middle" font-family="Liberation Sans">23:45</text><text x="607.6" y="600.5" font-size="11" fill="#595959" text-anchor="middle" font-family="Liberation Sans">00:15</text><text x="650.7" y="600.5" font-size="11" fill="#595959" text-anchor="middle" font-family="Liberation Sans">00:45</text><text x="693.9" y="600.5" font-size="11" fill="#595959" text-anchor="middle" font-family="Liberation Sans">01:15</text><text x="737.0" y="600.5" font-size="11" fill="#595959" text-anchor="middle" font-family="Liberation Sans">01:45</text><text x="780.1" y="600.5" font-size="11" fill="#595959" text-anchor="middle" font-family="Liberation Sans">02:15</text><text x="823.3" y="600.5" font-size="11" fill="#595959" text-anchor="middle" font-family="Liberation Sans">02:45</text><text x="866.4" y="600.5" font-size="11" fill="#595959" text-anchor="middle" font-family="Liberation Sans">03:15</text><text x="909.6" y="600.5" font-size="11" fill="#595959" text-anchor="middle" font-family="Liberation Sans">03:45</text><text x="952.7" y="600.5" font-size="11" fill="#595959" text-anchor="middle" font-family="Liberation Sans">04:15</text><text x="995.8" y="600.5" font-size="11" fill="#595959" text-anchor="middle" font-family="Liberation Sans">04:45</text><text x="1039.0" y="600.5" font-size="11" fill="#595959" text-anchor="middle" font-family="Liberation Sans">05:15</text><text x="1082.1" y="600.5" font-size="11" fill="#595959" text-anchor="middle" font-family="Liberation Sans">05:45</text><text x="1125.3" y="600.5" font-size="11" fill="#595959" text-anchor="middle" font-family="Liberation Sans">06:15</text><text x="1168.4" y="600.5" font-size="11" fill="#595959" text-anchor="middle" font-family="Liberation Sans">06:45</text><text x="1211.5" y="600.5" font-size="11" fill="#595959" text-anchor="middle" font-family="Liberation Sans">07:15</text><text x="1254.7" y="600.5" font-size="11" fill="#595959" text-anchor="middle" font-family="Liberation Sans">07:45</text><text x="1297.8" y="600.5" font-size="11" fill="#595959" text-anchor="middle" font-family="Liberation Sans">08:15</text><text x="1341.0" y="600.5" font-size="11" fill="#595959" text-anchor="middle" font-family="Liberation Sans">08:45</text><text x="1365" y="518" font-size="11" fill="#666" font-family="Liberation Sans">18</text><text x="1365" y="588" font-size="11" fill="#666" font-family="Liberation Sans">0</text><text transform="translate(1380.5 547) rotate(90)" font-size="11.5" fill="#555" text-anchor="middle" font-family="Liberation Sans">sessions/s</text></svg>
<div class="a" style="left:1612px;top:355px;width:180px;height:24px;background:#dfe9f7"></div>
<div class="a" style="left:1617px;top:312px;width:10px;height:10px;background:#747b31"></div>
<div class="t" style="left:1630px;top:310px;font-size:12.5px;color:#2b3a4a;letter-spacing:0.3px">Scheduler W...</div>
<div class="t" style="left:1700px;top:310px;width:87px;text-align:right;font-size:12.5px;color:#2b3a4a">77.<span style="font-size:11px;color:#888">29</span>%</div>
<div class="a" style="left:1617px;top:336px;width:10px;height:10px;background:#44ad4c"></div>
<div class="t" style="left:1630px;top:334px;font-size:12.5px;color:#2b3a4a;letter-spacing:0.3px">CPU Usage</div>
<div class="t" style="left:1700px;top:334px;width:87px;text-align:right;font-size:12.5px;color:#2b3a4a">12.<span style="font-size:11px;color:#888">40</span>%</div>
<div class="a" style="left:1617px;top:360px;width:10px;height:10px;background:#58a6f3"></div>
<div class="t" style="left:1630px;top:358px;font-size:12.5px;color:#2b3a4a;letter-spacing:0.3px">User IO Wait</div>
<div class="t" style="left:1700px;top:358px;width:87px;text-align:right;font-size:12.5px;color:#2b3a4a">9.<span style="font-size:11px;color:#888">09</span>%</div>
<div class="a" style="left:1617px;top:384px;width:10px;height:10px;background:#8ec7f8"></div>
<div class="t" style="left:1630px;top:382px;font-size:12.5px;color:#2b3a4a;letter-spacing:0.3px">System IO W...</div>
<div class="t" style="left:1700px;top:382px;width:87px;text-align:right;font-size:12.5px;color:#2b3a4a">0.<span style="font-size:11px;color:#888">83</span>%</div>
<div class="a" style="left:1795px;top:307px;width:19px;height:93px;background:#f0f0f0;border:1px solid #e0e0e0;border-bottom:none"></div>
<div class="caret" style="left:1800px;top:313px;border-top:none;border-bottom:4px solid #333;border-left-width:4px;border-right-width:4px"></div>
<div class="a" style="left:1796px;top:326px;width:17px;height:53px;background:linear-gradient(#fafafa,#ececec);border:1px solid #cfcfcf"></div>
<div class="a" style="left:447px;top:417px;width:1387px;height:2px;background:#a8a8a8"></div>
<div class="a" style="left:452px;top:452px;width:1377px;height:1px;background:#a8a8a8"></div>
<div class="a" style="left:455px;top:427px;width:72px;height:27px;background:linear-gradient(#fff,#f4f4f4);border:1px solid #c0c0c0;border-bottom:none;border-radius:3px 3px 0 0"></div>
<div class="t" style="left:464px;top:433px;font-size:12.5px;color:#333">Overview</div>
<div class="a" style="left:529px;top:430px;width:108px;height:23px;background:linear-gradient(#f4f4f4,#e4e4e4);border:1px solid #c0c0c0;border-bottom:none;border-radius:3px 3px 0 0"></div>
<div class="t" style="left:538px;top:435px;font-size:12.5px;color:#333">Blocking History</div>
<div class="a" style="left:639px;top:430px;width:119px;height:23px;background:linear-gradient(#f4f4f4,#e4e4e4);border:1px solid #c0c0c0;border-bottom:none;border-radius:3px 3px 0 0"></div>
<div class="t" style="left:648px;top:435px;font-size:12.5px;color:#333">Activity Highlights</div>
<div class="t h" style="left:457px;top:470px;font-size:13px">Active Time</div>
<div class="a" style="left:1438px;top:493px;width:2px;height:90px;background:#e8e8e8"></div>
<div class="t" style="left:1472px;top:488px;font-size:12.5px;color:#2b3a4a;letter-spacing:0.19px">Sum of all CPU Usage and non-Idle wait time, equal to</div>
<div class="t" style="left:1472px;top:504px;font-size:12.5px;color:#2b3a4a;letter-spacing:0.24px">the session total activity within the current interval.</div>
<div class="a" style="left:452px;top:612px;width:1377px;height:2px;background:#a8a8a8"></div>
<!--/RIGHT-->
<!--TABLE-->
<div class="a" style="left:457px;top:619px;width:1367px;height:219px;border:1px solid #c4c4c4;border-bottom:none;border-radius:3px 3px 0 0;background:#fff"></div>
<div class="a" style="left:458px;top:620px;width:1365px;height:24px;background:linear-gradient(#f8f8f8,#f1f1f1);border-bottom:1px solid #c4c4c4;border-radius:3px 3px 0 0"></div>
<div class="t" style="left:462px;top:624px;font-size:12.5px;color:#2b3a4a;letter-spacing:0.2px">Workload related Metrics</div>
<div class="a" style="left:463px;top:644px;width:1355px;height:39px;background:linear-gradient(#fdfdfd 0%,#fbfbfb 20%,#eaeaea 65%,#e0e0e0 80%,#dedede 100%);border-bottom:2px solid #b8b8b8"></div>
<svg class="a" style="left:472px;top:657px" width="22" height="16"><g transform="translate(7.5 7.5)" fill="#8a9ab2"><circle r="5.2"/><g><rect x="-1.3" y="-6.8" width="2.6" height="13.6"/><rect x="-1.3" y="-6.8" width="2.6" height="13.6" transform="rotate(45)"/><rect x="-1.3" y="-6.8" width="2.6" height="13.6" transform="rotate(90)"/><rect x="-1.3" y="-6.8" width="2.6" height="13.6" transform="rotate(135)"/></g><circle r="2.6" fill="#dfe6ef"/></g><path d="M16 7h5l-2.5 3.5z" fill="#555"/></svg>
<div class="t" style="left:494px;top:658px;font-size:12.5px;color:#2b3a4a">Select Metric</div>
<div class="a" style="left:578px;top:655px;width:2px;height:21px;background:#8c8c8c"></div>
<svg class="a" style="left:589px;top:655px" width="23" height="22"><rect x="1.5" y="1.5" width="11" height="15" rx="1.5" fill="#fafafa" stroke="#b8b8b8"/><rect x="9.5" y="5.5" width="11" height="15" rx="1.5" fill="#fafafa" stroke="#b8b8b8"/><path d="M3 7h5M6.5 5l2 2-2 2" stroke="#333" fill="none" stroke-width="1.1"/><path d="M19 13h-5M15.5 11l-2 2 2 2" stroke="#333" fill="none" stroke-width="1.1"/></svg>
<div class="t" style="left:613px;top:659px;font-size:12.5px;color:#2b3a4a">Compare</div>
<div class="a" style="left:1566px;top:654px;width:219px;height:23px;background:#fff;border:1px solid #a8a8a8"></div>
<div class="t" style="left:1571px;top:657px;font-size:12.5px;color:#999">Search</div>
<svg class="a" style="left:1748px;top:657px" width="16" height="16"><circle cx="10" cy="6" r="4.5" fill="#cfe6fb" stroke="#4a8fd8" stroke-width="1.5"/><path d="M6.8 9.2L2 14" stroke="#e0902a" stroke-width="2.4" stroke-linecap="round"/></svg>
<div class="caret" style="left:1769px;top:664px;border-left-width:4px;border-right-width:4px;border-top-width:4px;border-top-color:#555"></div>
<svg class="a" style="left:1802px;top:658px" width="15" height="15"><g fill="#7a7a7a"><rect x="1" y="1" width="2" height="2"/><rect x="5" y="1" width="8" height="2"/><rect x="1" y="5" width="2" height="2"/><rect x="5" y="5" width="8" height="2"/><rect x="1" y="9" width="2" height="2"/><rect x="5" y="9" width="4" height="2"/><path d="M8 10h6l-3 4z"/></g></svg>
<div class="a" style="left:463px;top:683px;width:1355px;height:19px;background:#e7e7e7;border-bottom:1px solid #d8d8d8"></div><div class="a" style="left:463px;top:683px;width:713px;height:18px;background:#f0f0f0"></div>
<div class="a" style="left:1176px;top:683px;width:1px;height:155px;background:#d4d4d4"></div>
<div class="a" style="left:1411px;top:683px;width:1px;height:155px;background:#d4d4d4"></div>
<div class="t" style="left:796px;top:686px;font-size:12.5px;color:#22334a">Metric</div>
<div class="caret" style="left:836px;top:692px;border-top:none;border-bottom:5px solid #6a7888;border-left-width:4px;border-right-width:4px"></div>
<div class="t" style="left:1266px;top:686px;letter-spacing:0.15px;font-size:12.5px;color:#22334a">Resource</div>
<div class="t" style="left:1591px;top:686px;letter-spacing:0.3px;font-size:12.5px;color:#22334a">Total</div>
<div class="a" style="left:463px;top:702px;width:1336px;height:25px;background:#dfe9f7;border-bottom:1px solid #d6d6d6"></div>
<div class="t" style="left:468px;top:706px;font-size:12.5px;color:#2b3a4a">Active Time</div>
<div class="t" style="left:1181px;top:706px;font-size:12.5px;color:#2b3a4a">Workload</div>
<div class="t" style="left:1500px;top:706px;width:295px;text-align:right;font-size:12.5px;color:#2b3a4a">189,064.<span style="font-size:11px;color:#888">58</span></div>
<div class="a" style="left:463px;top:727px;width:1336px;height:25px;background:#fff;border-bottom:1px solid #d6d6d6"></div>
<div class="t" style="left:468px;top:731px;font-size:12.5px;color:#2b3a4a">Average SQL Response Time</div>
<div class="t" style="left:1181px;top:731px;font-size:12.5px;color:#2b3a4a">Workload</div>
<div class="t" style="left:1500px;top:731px;width:295px;text-align:right;font-size:12.5px;color:#2b3a4a">10.<span style="font-size:11px;color:#888">54</span></div>
<div class="a" style="left:463px;top:752px;width:1336px;height:25px;background:#fff;border-bottom:1px solid #d6d6d6"></div>
<div class="t" style="left:468px;top:756px;font-size:12.5px;color:#2b3a4a">Buffer Gets</div>
<div class="t" style="left:1181px;top:756px;font-size:12.5px;color:#2b3a4a">Workload</div>
<div class="t" style="left:1500px;top:756px;width:295px;text-align:right;font-size:12.5px;color:#2b3a4a">474,324,706.<span style="font-size:11px;color:#888">00</span></div>
<div class="a" style="left:463px;top:777px;width:1336px;height:25px;background:#fff;border-bottom:1px solid #d6d6d6"></div>
<div class="t" style="left:468px;top:781px;font-size:12.5px;color:#2b3a4a">Bytes sent via SQL*Net to client</div>
<div class="t" style="left:1181px;top:781px;font-size:12.5px;color:#2b3a4a">Network</div>
<div class="t" style="left:1500px;top:781px;width:295px;text-align:right;font-size:12.5px;color:#2b3a4a">1,793,663.<span style="font-size:11px;color:#888">67</span></div>
<div class="a" style="left:463px;top:802px;width:1336px;height:25px;background:#fff;border-bottom:1px solid #d6d6d6"></div>
<div class="t" style="left:468px;top:806px;font-size:12.5px;color:#2b3a4a">Bytes sent via SQL*Net to dblink</div>
<div class="t" style="left:1181px;top:806px;font-size:12.5px;color:#2b3a4a">Network</div>
<div class="t" style="left:1500px;top:806px;width:295px;text-align:right;font-size:12.5px;color:#2b3a4a">0.<span style="font-size:11px;color:#888">00</span></div>
<div class="a" style="left:463px;top:827px;width:1336px;height:25px;background:#fff;border-bottom:1px solid #d6d6d6"></div>
<div class="t" style="left:468px;top:831px;font-size:12.5px;color:#2b3a4a">CPU Usage</div>
<div class="t" style="left:1181px;top:831px;font-size:12.5px;color:#2b3a4a">CPU</div>
<div class="t" style="left:1500px;top:831px;width:295px;text-align:right;font-size:12.5px;color:#2b3a4a">22,207.<span style="font-size:11px;color:#888">75</span></div>
<div class="a" style="left:1176px;top:683px;width:1px;height:155px;background:#d8d8d8"></div>
<div class="a" style="left:1411px;top:683px;width:1px;height:155px;background:#d8d8d8"></div>
<div class="a" style="left:463px;top:683px;width:1px;height:155px;background:#d0d0d0"></div>
<div class="a" style="left:1799px;top:702px;width:19px;height:136px;background:#f0f0f0;border-left:1px solid #e0e0e0"></div>
<div class="caret" style="left:1805px;top:709px;border-top:none;border-bottom:4px solid #444;border-left-width:3.5px;border-right-width:3.5px"></div>
<div class="a" style="left:1799px;top:720px;width:19px;height:54px;background:linear-gradient(90deg,#fafafa,#e8e8e8);border:1.5px solid #b0b0b0"></div>
<div class="a" style="left:1406px;top:681px;width:430px;height:150px;border:3px solid #e4403c"></div>
<!--/TABLE-->
</body></html>
